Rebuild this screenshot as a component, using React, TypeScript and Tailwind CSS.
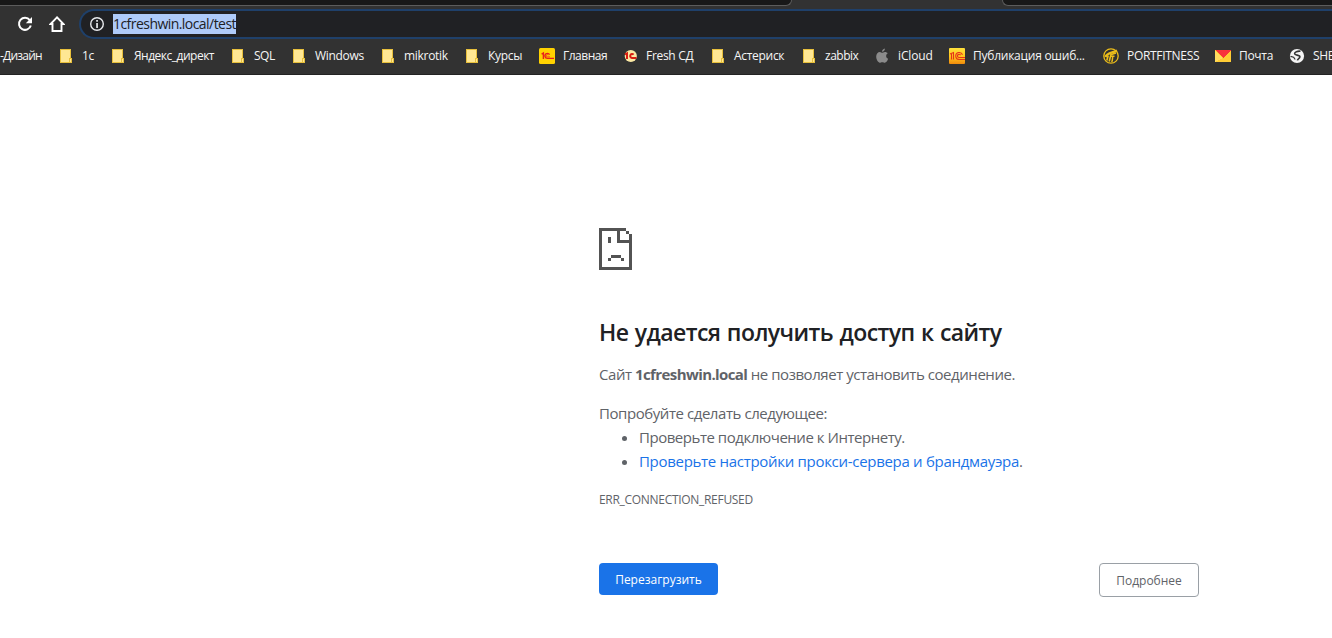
import React from "react";

type IconName =
  | "folder"
  | "oneC"
  | "oneCRound"
  | "oneCOrange"
  | "apple"
  | "fitness"
  | "mail"
  | "globe";

type Bookmark = {
  title: string;
  icon: IconName;
  width: string;
  tracking: string;
};

const BOOKMARKS: Bookmark[] = [
  { title: "1с", icon: "folder", width: "w-[52px]", tracking: "tracking-[-0.3px]" },
  { title: "Яндекс_директ", icon: "folder", width: "w-[120px]", tracking: "tracking-[-0.5px]" },
  { title: "SQL", icon: "folder", width: "w-[61px]", tracking: "tracking-[-0.5px]" },
  { title: "Windows", icon: "folder", width: "w-[89px]", tracking: "tracking-[-0.3px]" },
  { title: "mikrotik", icon: "folder", width: "w-[84px]", tracking: "tracking-[-0.3px]" },
  { title: "Курсы", icon: "folder", width: "w-[75px]", tracking: "tracking-[-0.3px]" },
  { title: "Главная", icon: "oneC", width: "w-[83px]", tracking: "tracking-[-0.5px]" },
  { title: "Fresh СД", icon: "oneCRound", width: "w-[88px]", tracking: "tracking-[-0.3px]" },
  { title: "Астериск", icon: "folder", width: "w-[91px]", tracking: "tracking-[-0.3px]" },
  { title: "zabbix", icon: "folder", width: "w-[73px]", tracking: "tracking-[-0.5px]" },
  { title: "iCloud", icon: "apple", width: "w-[75px]", tracking: "tracking-[-0.15px]" },
  { title: "Публикация ошиб...", icon: "oneCOrange", width: "w-[154px]", tracking: "tracking-[-0.25px]" },
  { title: "PORTFITNESS", icon: "fitness", width: "w-[112px]", tracking: "tracking-[-0.3px]" },
  { title: "Почта", icon: "mail", width: "w-[74px]", tracking: "tracking-[-0.3px]" },
  { title: "SHEIN", icon: "globe", width: "w-[80px]", tracking: "tracking-[-0.3px]" },
];

function OneCMark({ color }: { color: string }) {
  return (
    <g fill="none" stroke={color} strokeWidth="1.4">
      <path d="M2.6 6.2 4.4 5v6" />
      <path d="M10.6 6.6A2.5 2.5 0 1 0 8.6 10.4H15" />
      <path d="M9.4 7A1.1 1.1 0 1 0 8.6 8.9H11" strokeWidth="0.7" />
    </g>
  );
}

function BookmarkIcon({ name }: { name: IconName }) {
  return (
    <svg width="16" height="16" viewBox="0 0 16 16" className="shrink-0">
      {name === "folder" && (
        <g shapeRendering="crispEdges">
          <path d="M2 1h11v9h1v5H2z" fill="#e8c03c" />
          <path d="M3 2h9v8h-1v4H3z" fill="#ffe793" />
          <path d="M12 11h1v3h-1z" fill="#ffe793" />
        </g>
      )}
      {name === "oneC" && (
        <>
          <rect width="16" height="16" rx="1.5" fill="#ffd200" />
          <OneCMark color="#e8201c" />
        </>
      )}
      {name === "oneCRound" && (
        <>
          <circle cx="8.8" cy="8" r="6.1" fill="#fbe9a4" />
          <g fill="none" stroke="#d81e12" strokeWidth="2">
            <path d="M3 6.4 5 5.4V11" />
            <path d="M11.6 6.6A2 2 0 1 0 10 10H14.5" />
          </g>
        </>
      )}
      {name === "oneCOrange" && (
        <>
          <defs>
            <linearGradient id="orange" x1="0" y1="0" x2="0" y2="1">
              <stop offset="0" stopColor="#ffe23c" />
              <stop offset="0.55" stopColor="#ffc51c" />
              <stop offset="1" stopColor="#f08a0c" />
            </linearGradient>
          </defs>
          <rect width="16" height="16" rx="1" fill="url(#orange)" />
          <g fill="none" stroke="#e5341a" strokeWidth="1.1">
            <path d="M1 6 4.5 4.5V11.5M2.5 6v5.5" />
            <path d="M13.5 6.8A3.5 3.5 0 1 0 10 11.5H16" />
            <path d="M11.5 7.2A1.6 1.6 0 1 0 10 9.5H16" />
          </g>
        </>
      )}
      {name === "apple" && (
        <g fill="#8b8b8b">
          <path d="M10.9.4c.1 1.7-1.2 3.4-2.9 3.4C7.8 2.2 9.2.7 10.9.4z" />
          <path d="M8.1 4.7c.7 0 1.5-.8 2.9-.8 1.1 0 2.1.6 2.7 1.4-2.3 1.5-1.9 4.5.4 5.5-.6 1.9-1.9 3.9-3.3 3.9-.9 0-1.3-.5-2.5-.5s-1.6.5-2.5.5C4.1 14.7 2.2 11.7 2.2 8.6c0-3 1.8-4.7 3.6-4.7 1.1 0 1.8.8 2.3.8z" />
        </g>
      )}
      {name === "fitness" && (
        <g fill="none" stroke="#ecbd1a">
          <circle cx="8" cy="8" r="7.2" strokeWidth="1.3" />
          <path d="M2.5 9C4 4.8 8.5 5.5 14 2.5" strokeWidth="2.4" />
          <path d="M5.2 7.5 3.8 12.5M8 6.5 6.2 13.5M7.5 6.7 13 5" strokeWidth="1.6" />
          <path d="M8 8.2h3.5M10 7.5C9 9.5 10.2 12 8.6 14" strokeWidth="1.5" />
        </g>
      )}
      {name === "mail" && (
        <g shapeRendering="crispEdges">
          <path d="M0 2h16v12H0z" fill="#ffcc35" />
          <path d="M0 14V3l8 7z" fill="#ffdc60" />
          <path d="M0 2h16L8 10z" fill="#f8333c" />
        </g>
      )}
      {name === "globe" && (
        <>
          <circle cx="8" cy="8" r="7.1" fill="#f4f4f4" />
          <path
            d="M11.5 3.2C8.5 2.8 5.5 4 5.6 5.8 5.7 7.6 10.8 6.6 10.9 8.7 11 10.4 8.6 10.6 8.4 12.3"
            fill="none"
            stroke="#333"
            strokeWidth="1.6"
          />
          <path d="M1.5 8.3 4.6 9.2 6.2 11.5" fill="none" stroke="#333" strokeWidth="1.3" />
        </>
      )}
    </svg>
  );
}

function TabStrip() {
  return (
    <div className="flex h-1.5 justify-between overflow-hidden">
      <div className="h-1.5 w-[792px] rounded-br-[6px] border-r border-b border-[#5c5c5c] bg-[#181818]" />
      <div className="h-1.5 w-[330px] rounded-bl-[6px] border-b border-l border-[#5c5c5c] bg-[#181818]" />
    </div>
  );
}

function AddressBar() {
  return (
    <div className="flex h-[33px] items-start pt-[3px]">
      <div className="flex h-[30px] w-[79px] shrink-0 items-center gap-4 pl-[17px]">
        <svg width="16" height="16" viewBox="0 0 16 16">
          <path d="M12.8 4.2A6 6 0 1 0 13.8 9.5" fill="none" stroke="#fff" strokeWidth="2" />
          <path d="M15 1v6.2H8.8z" fill="#fff" />
        </svg>
        <svg width="16" height="16" viewBox="0 0 16 16">
          <path d="M8 1.3 1.5 8h2v7h9V8h2z" fill="none" stroke="#fff" strokeWidth="1.9" />
        </svg>
      </div>
      <div className="flex h-[30px] flex-1 items-center rounded-l-full border-2 border-r-0 border-[#1f406a] bg-[#202124] pl-2">
        <svg width="16" height="16" viewBox="0 0 16 16">
          <circle cx="8" cy="8" r="6.3" fill="none" stroke="#e8eaed" strokeWidth="1.4" />
          <path d="M7.2 4h1.7v1.7H7.2zM7.2 7h1.7v5H7.2z" fill="#e8eaed" />
        </svg>
        <span className="ml-2 h-5 w-[123px] bg-[#aecbfa] text-sm leading-5 tracking-[-0.55px] whitespace-nowrap text-[#202124]">
          1cfreshwin.local/test
        </span>
      </div>
    </div>
  );
}

function BookmarksBar() {
  return (
    <div className="flex h-9 overflow-hidden border-b border-[#232323] pt-[9px] text-xs leading-4 whitespace-nowrap text-[#f5f5f5]">
      <div className="w-[58px] shrink-0 tracking-[-0.8px]">-Дизайн</div>
      {BOOKMARKS.map((b) => (
        <div key={b.title} className={`flex shrink-0 gap-2 ${b.width} ${b.tracking}`}>
          <BookmarkIcon name={b.icon} />
          <span>{b.title}</span>
        </div>
      ))}
    </div>
  );
}

function SadPage() {
  return (
    <svg width="33" height="42" viewBox="0 0 33 42" shapeRendering="crispEdges" fill="#535353">
      <path d="M0 0h27v3h-6v9h12v30H0zM3 3v36h27V15H18V3z" fillRule="evenodd" />
      <path d="M27 3h3v3h-3zM30 6h3v9h-3zM9 9h3v6H9z" />
      <path d="M12 27h10v3H12zM9 30h3v3H9zM22 30h3v3h-3z" />
    </svg>
  );
}

export default function App() {
  return (
    <div className="h-[638px] w-[1332px] overflow-hidden bg-white font-['Open_Sans','Noto_Sans',sans-serif]">
      <header className="h-[75px] bg-[#323232]">
        <TabStrip />
        <AddressBar />
        <BookmarksBar />
      </header>
      <main className="ml-[599px] w-[600px] pt-[153px] text-[15px] leading-6 text-[#5f6368]">
        <SadPage />
        <h1 className="mt-[47px] text-[23px] leading-[30px] font-semibold tracking-[-0.56px] whitespace-nowrap text-[#202124] [word-spacing:1px]">
          Не удается получить доступ к сайту
        </h1>
        <p className="mt-[15px] tracking-[-0.45px] whitespace-nowrap">
          Сайт <strong className="font-bold tracking-[-0.6px]">1cfreshwin.local</strong> не позволяет
          установить соединение.
        </p>
        <p className="mt-[15px] tracking-[-0.44px]">Попробуйте сделать следующее:</p>
        <ul className="list-disc pl-10 whitespace-nowrap">
          <li className="tracking-[-0.47px]">Проверьте подключение к Интернету.</li>
          <li className="tracking-[-0.3px]">
            <a className="text-[#1a73e8]">Проверьте настройки прокси-сервера и брандмауэра</a>.
          </li>
        </ul>
        <div className="mt-[18px] text-xs leading-[18px] tracking-[-0.3px]">ERR_CONNECTION_REFUSED</div>
        <div className="mt-[54px] flex items-start justify-between text-xs">
          <button className="h-8 w-[119px] rounded bg-[#1a73e8] pt-0.5 text-white">Перезагрузить</button>
          <button className="h-[34px] w-[100px] rounded border border-[#9aa0a6] pt-0.5">Подробнее</button>
        </div>
      </main>
    </div>
  );
}
